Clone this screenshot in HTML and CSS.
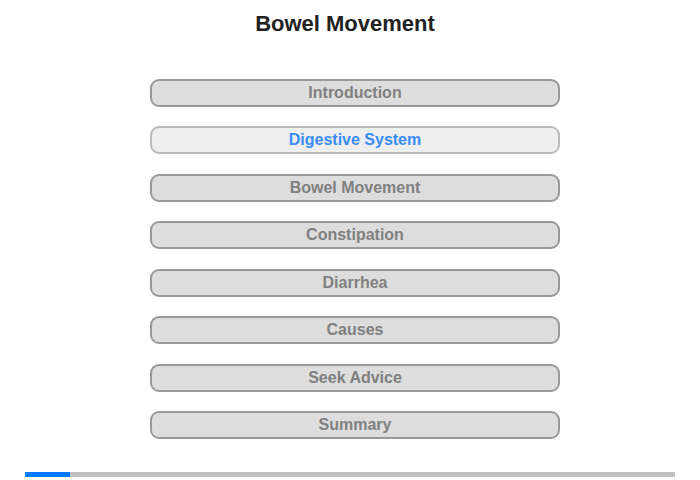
FILE: index.html
```html
<!DOCTYPE html>
<html lang="en">
<head>
    <meta charset="UTF-8">
    <title>Bowel Movement</title>
    <link rel="stylesheet" href="styles.css">
</head>
<body>
    <h1 class="title">Bowel Movement</h1>

    <div class="menu">
        <div class="menu-item">Introduction</div>
        <div class="menu-item active">Digestive System</div>
        <div class="menu-item">Bowel Movement</div>
        <div class="menu-item">Constipation</div>
        <div class="menu-item">Diarrhea</div>
        <div class="menu-item">Causes</div>
        <div class="menu-item">Seek Advice</div>
        <div class="menu-item">Summary</div>
    </div>

    <div class="progress">
        <div class="progress-fill" style="width: 45px;"></div>
    </div>
</body>
</html>
```

FILE: styles.css
```css
body {
    font-family: 'Liberation Sans', Arial, sans-serif;
    background-color: #fff;
    margin: 0;
    padding: 0;
    width: 700px;
    height: 480px;
    overflow: hidden;
}

.title {
    margin: 0;
    padding-top: 11px;
    padding-right: 10px;
    font-size: 22px;
    line-height: 25px;
    font-weight: bold;
    color: #222;
    text-align: center;
}

.menu {
    display: flex;
    flex-direction: column;
    gap: 19.5px;
    width: 410px;
    margin: 42.6px 0 0 150px;
}

.menu-item {
    box-sizing: border-box;
    height: 28px;
    border: 2px solid #999;
    border-radius: 9px;
    background-color: #ddd;
    color: #808080;
    font-size: 16px;
    font-weight: bold;
    line-height: 24px;
    text-align: center;
}

.menu-item.active {
    background-color: #eee;
    border-color: #bbb;
    color: #3a8cf8;
}

.progress {
    height: 5px;
    margin: 32.9px 25px 0 25px;
    background-color: #c0c0c0;
}

.progress-fill {
    height: 100%;
    background-color: #007bff;
}
```
